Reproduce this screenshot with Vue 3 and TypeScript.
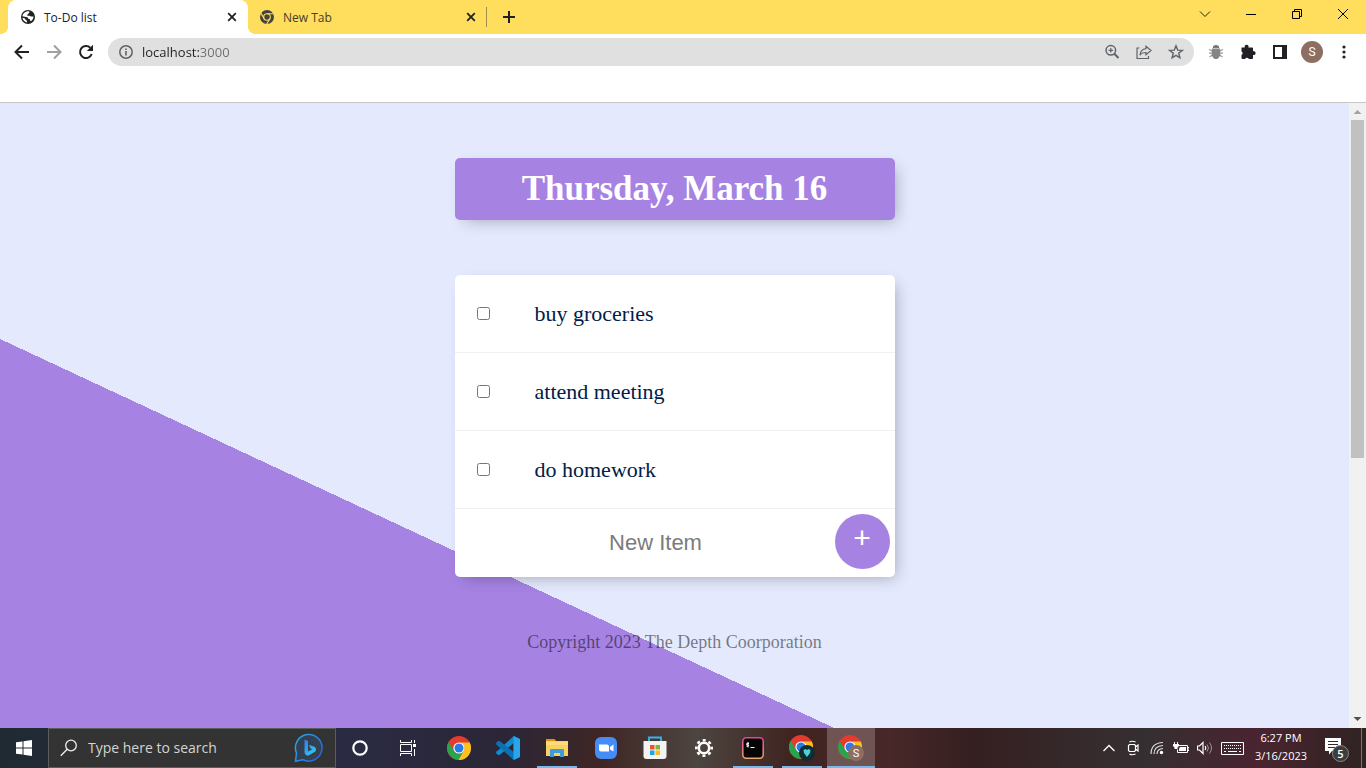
<script setup lang="ts">
import { ref } from 'vue'

interface Todo { id: string; text: string; done: boolean }

const title = 'Thursday, March 16'
const address = ref('localhost:3000')
const search = ref('')
const newItem = ref('')
const todos = ref<Todo[]>([
  { id: 'todo-1', text: 'buy groceries', done: false },
  { id: 'todo-2', text: 'attend meeting', done: false },
  { id: 'todo-3', text: 'do homework', done: false },
])

function addItem() {
  const text = newItem.value.trim()
  if (!text) return
  todos.value.push({ id: `todo-${todos.value.length + 1}`, text, done: false })
  newItem.value = ''
}
</script>

<template>
  <div class="screen">
    <svg class="defs" aria-hidden="true">
      <symbol id="chrome" viewBox="0 0 24 24">
        <circle cx="12" cy="12" r="12" fill="#e33b2e" />
        <path d="M1.6 6 7.2 14.8A5.5 5.5 0 0 0 16.8 14.8L11.5 24A12 12 0 0 1 1.6 6z" fill="#2ba24c" />
        <path d="M12 6.5H22.7A12 12 0 0 1 11.5 24L16.8 14.8A5.5 5.5 0 0 0 12 6.5z" fill="#fcc31e" />
        <circle cx="12" cy="12" r="5.6" fill="#fff" />
        <circle cx="12" cy="12" r="4.5" fill="#2a7bea" />
      </symbol>
      <symbol id="cross" viewBox="0 0 10 10">
        <path d="M1.2 1.2 8.8 8.8M8.8 1.2 1.2 8.8" fill="none" stroke="currentColor" stroke-width="1.8" />
      </symbol>
    </svg>

    <header class="tabstrip">
      <div class="tab active">
        <svg width="14" height="14" viewBox="0 0 14 14"><circle cx="7" cy="7" r="7" fill="#202124" /><path d="M7.6 1.3c1.2.3 1.1 1.3.3 1.8-.7.5-.6 1.1-1.3 1.4-.5.2-.4 1-.1 1.3.9.2 1.9-.5 2.6.1.8.7 2 .6 3.4.6-.1 2-1 3.7-2.6 4.8-.6-.1-.9-.4-.8-1.2 0-.8-.6-.8-1.4-1-.7-.4-.6-1.5-1.4-1.9C4.7 6.8 2.7 6.6 1.4 6.3 1.7 3.6 4.3 1.2 7.6 1.3z" fill="#fff" /><path d="M1.5 7.8c1.6.2 2.7.7 3 1.6.2.9 1.5.8 1.5 1.7v1.3C3.6 12 1.7 10.2 1.5 7.8z" fill="#fff" /></svg>
        <span class="tab-title">To-Do list</span>
        <button class="close" aria-label="Close To-Do list"><svg width="10" height="10"><use href="#cross" /></svg></button>
      </div>
      <div class="tab">
        <svg width="14" height="14" viewBox="0 0 14 14"><circle cx="7" cy="7" r="7" fill="#44433f" /><g fill="none" stroke="#ffdd5d" stroke-width="1.1"><circle cx="7" cy="7" r="3.3" /><path d="M7 3.7h6.5M4.1 8.6.9 3.1M9.9 8.6 6.7 14.1" /></g></svg>
        <span class="tab-title">New Tab</span>
        <button class="close" aria-label="Close New Tab"><svg width="10" height="10"><use href="#cross" /></svg></button>
      </div>
      <span class="tab-divider"></span>
      <button class="new-tab" aria-label="New tab"><svg width="12" height="12"><path d="M6 0v12M0 6h12" stroke="#202124" stroke-width="2" /></svg></button>
      <div class="window-controls">
        <button aria-label="Search tabs"><svg width="12" height="12" viewBox="0 0 12 12"><path d="M1 3.5 6 8.5 11 3.5" fill="none" stroke="#222" /></svg></button>
        <button aria-label="Minimize"><svg width="10" height="10"><path d="M0 5.500h10" stroke="#000" /></svg></button>
        <button aria-label="Restore"><svg width="10" height="10"><path d="M.5 2.500h7v7h-7zM2.500 2.500v-2h7v7h-2" fill="none" stroke="#000" /></svg></button>
        <button aria-label="Close window"><svg width="10" height="10"><path d="M0 0 10 10M10 0 0 10" stroke="#000" /></svg></button>
      </div>
    </header>

    <nav class="toolbar">
      <button class="nav-button" aria-label="Back"><svg width="16" height="16" viewBox="0 0 16 16"><path d="M15 8H2M8 1.500 1.500 8 8 14.500" fill="none" stroke="#202124" stroke-width="2" /></svg></button>
      <button class="nav-button" aria-label="Forward"><svg width="16" height="16" viewBox="0 0 16 16"><path d="M1 8H14M8 1.500 14.500 8 8 14.500" fill="none" stroke="#a0a0a2" stroke-width="2" /></svg></button>
      <button class="nav-button" aria-label="Reload"><svg width="16" height="16" viewBox="0 0 16 16"><path d="M13.700 10A6 6 0 1 1 12.300 3.800" fill="none" stroke="#202124" stroke-width="2" /><path d="M15 .8V7H8.800z" fill="#202124" /></svg></button>
      <div class="omnibox">
        <svg width="14" height="14" viewBox="0 0 14 14"><circle cx="7" cy="7" r="6.200" fill="none" stroke="#5f6368" stroke-width="1.500" /><path d="M7 6v4.500M7 3.500V5" stroke="#5f6368" stroke-width="1.600" /></svg>
        <input v-model="address" class="address" type="text" aria-label="Address" />
        <button aria-label="Zoom"><svg width="16" height="16" viewBox="0 0 16 16"><g fill="none" stroke="#5f6368" stroke-width="1.500"><circle cx="6.800" cy="6.300" r="4.800" /><path d="m10.300 9.800 4.200 4.200" stroke-width="2" /><path d="M6.800 4v4.600M4.500 6.300h4.600" stroke-width="1.200" /></g></svg></button>
        <button aria-label="Share"><svg width="16" height="16" viewBox="0 0 16 16"><path d="M3.500 4H1v10.500h11.500V12M10 2.200l5 4.300-5 4.300V8.500C7 8.500 5 9.500 4 11.200 4.300 7.500 6.500 5 10 4.600z" fill="none" stroke="#5f6368" stroke-width="1.200" /></svg></button>
        <button aria-label="Bookmark"><svg width="16" height="16" viewBox="0 0 16 16"><path d="m8 1.800 1.700 4.300 4.600.3-3.600 2.900 1.200 4.500L8 11.300l-3.900 2.500 1.200-4.500L1.700 6.400l4.600-.3z" fill="none" stroke="#5f6368" stroke-width="1.400" /></svg></button>
      </div>
      <div class="extensions">
        <button aria-label="Debugger extension"><svg width="16" height="16" viewBox="0 0 16 16"><path d="M1 5.500 4 7M15 5.500 12 7M1 9.200h3M15 9.200h-3M1.500 13 5 10.500M14.500 13 11 10.500" stroke="#999" stroke-width="1.200" /><path d="M4.800 4C4.800 1.700 6 1 8 1s3.200.7 3.200 3z" fill="#777" /><path d="M3.800 5h8.400v5.200c0 2.500-2 4.800-4.200 4.800s-4.200-2.300-4.200-4.800z" fill="#858585" /><path d="M4 4.600h8" stroke="#bbb" /></svg></button>
        <button aria-label="Extensions"><svg width="16" height="16" viewBox="0 0 16 16"><path d="M1.500 3.500h3.300a2 2 0 1 1 3.600 0h3.900q.7 0 .7.700v3a2 2 0 1 1 0 3.800v3q0 .9-.9.900H8.800a2 2 0 0 0-3.700 0H2.300q-.8 0-.8-.8v-3a2 2 0 0 0 0-3.600z" fill="#202124" /></svg></button>
        <button aria-label="Side panel"><svg width="14" height="14"><path d="M0 0h14v14H0zM2 2v10h7V2z" fill="#202124" fill-rule="evenodd" /></svg></button>
        <button class="avatar" aria-label="Profile">S</button>
        <button aria-label="Menu"><svg width="4" height="14" viewBox="0 0 4 14"><g fill="#202124"><circle cx="2" cy="2" r="1.600" /><circle cx="2" cy="7" r="1.600" /><circle cx="2" cy="12" r="1.600" /></g></svg></button>
      </div>
    </nav>
    <div class="bookmarks"></div>

    <div class="viewport">
      <main class="page">
        <h1 class="heading">{{ title }}</h1>
        <form class="list" @submit.prevent="addItem">
          <div v-for="todo in todos" :key="todo.id" class="item">
            <input :id="todo.id" v-model="todo.done" type="checkbox" />
            <label :for="todo.id">{{ todo.text }}</label>
          </div>
          <div class="entry">
            <input v-model="newItem" type="text" placeholder="New Item" aria-label="New Item" />
            <button type="submit" class="add">+</button>
          </div>
        </form>
        <footer>Copyright 2023 The Depth Coorporation</footer>
      </main>
      <div class="scrollbar">
        <svg width="17" height="17"><path d="M4.500 11 8.500 7l4 4z" fill="#a3a3a3" /></svg>
        <div class="thumb"></div>
        <svg width="17" height="17"><path d="M4.500 6h8l-4 4z" fill="#505050" /></svg>
      </div>
    </div>

    <div class="taskbar">
      <button class="start" aria-label="Start"><svg width="16" height="16" viewBox="0 0 16 16"><path d="M0 2.300 6.500 1.400V7.500H0zM7.500 1.200 16 0V7.500H7.500zM0 8.500H6.500V14.600L0 13.700zM7.500 8.500H16V16L7.500 14.800z" fill="#fff" /></svg></button>
      <div class="search">
        <svg width="18" height="18" viewBox="0 0 18 18"><circle cx="11" cy="6.500" r="5.300" fill="none" stroke="#eee" stroke-width="1.300" /><path d="M7.200 10.300.8 16.800" stroke="#eee" stroke-width="1.400" /></svg>
        <input v-model="search" type="text" placeholder="Type here to search" aria-label="Type here to search" />
        <svg width="30" height="30" viewBox="0 0 30 30">
          <defs>
            <linearGradient id="bing-edge" x2="1" y2=".6"><stop stop-color="#28aee0" /><stop offset="1" stop-color="#2869dc" /></linearGradient>
            <linearGradient id="bing-mark" x2=".7" y2="1"><stop stop-color="#3478e8" /><stop offset="1" stop-color="#35c7ee" /></linearGradient>
          </defs>
          <path d="M1.500 28.200 2.500 20A13.300 13.300 0 1 1 9 26.800z" fill="#33404f" stroke="url(#bing-edge)" stroke-width="1.500" />
          <path d="m10.500 6.500 3.500 1.600v10.400l4.200-2.300-1.900-1-1.400-3.500 5.500 2.100q2 1 1.600 3.100-.2 1.300-1.500 2.200L14 22.800q-3.500-.5-3.500-4z" fill="url(#bing-mark)" />
        </svg>
      </div>
      <button class="task" aria-label="Cortana"><svg width="16" height="16"><circle cx="8" cy="8" r="6.700" fill="none" stroke="#fff" stroke-width="2.200" /></svg></button>
      <button class="task" aria-label="Task view"><svg width="17" height="16" viewBox="0 0 17 16"><path d="M.5 0v2.500h11V0M.5 16v-2.500h11V16M.5 4.500h11v7H.5zM14.500 0v3M14.500 9v7" fill="none" stroke="#fff" /><path d="M13 4h3v3h-3z" fill="#fff" /></svg></button>
      <div class="apps">
        <button class="task" aria-label="Google Chrome"><svg width="24" height="24"><use href="#chrome" /></svg></button>
        <button class="task" aria-label="Visual Studio Code"><svg width="24" height="24" viewBox="0 0 24 24"><path d="M17.800 0 24 3v18l-6.200 3-15-14.700 1.700-1.500L17.500 18z" fill="#1479bd" /><path d="M17.800 0 2 14.600.3 15.400 0 17l2 2 2-.3L17.800 7z" fill="#118bd1" /><path d="m0 7 2-2 2 .2 14 11V24L.4 8.700z" fill="#0b70b4" /><path d="M17.500 0 24 3v18l-6.500 3z" fill="#28a5ec" /></svg></button>
        <button class="task open" aria-label="File Explorer"><svg width="22" height="20" viewBox="0 0 22 20"><path d="M0 1h8l2 2h12v15H0z" fill="#f8d163" /><path d="M0 1h8l1.500 2H0z" fill="#dc9410" /><path d="M0 4h22v3H0z" fill="#ffdc78" /><path d="M4 19v-7q0-1 1-1h12q1 0 1 1v7h-4v-4H8v4z" fill="#409cd4" /></svg></button>
        <button class="task" aria-label="Zoom"><svg width="22" height="22" viewBox="0 0 22 22"><rect width="22" height="22" rx="6" fill="#458cf6" /><path d="M4 7.500h8q2 0 2 2v5H6q-2 0-2-2zM15 10l3.500-2.500v7L15 12.500z" fill="#fff" /></svg></button>
        <button class="task" aria-label="Microsoft Store"><svg width="24" height="24" viewBox="0 0 24 24"><path d="M6 6V1.500h12V6" fill="none" stroke="#35b5e9" stroke-width="1.800" /><path d="M.5 5h23v15q0 3-3 3h-17q-3 0-3-3z" fill="#f3f3f4" /><path d="M7 9h4.500v4.500H7z" fill="#ef5325" /><path d="M12.500 9H17v4.500h-4.500z" fill="#7db82f" /><path d="M7 14.500h4.500V19H7z" fill="#21a2e8" /><path d="M12.500 14.500H17V19h-4.500z" fill="#fbb91c" /></svg></button>
        <button class="task" aria-label="Settings"><svg width="18" height="18" viewBox="0 0 18 18"><circle cx="9" cy="9" r="5.200" fill="none" stroke="#fff" stroke-width="2.600" /><circle cx="9" cy="9" r="7.700" fill="none" stroke="#fff" stroke-width="2.500" stroke-dasharray="3.020 3.020" stroke-dashoffset="1.500" /></svg></button>
        <button class="task open" aria-label="Terminal"><svg width="22" height="22" viewBox="0 0 22 22"><defs><linearGradient id="terminal-edge" x2="0" y2="1"><stop stop-color="#e5459e" /><stop offset="1" stop-color="#efa468" /></linearGradient></defs><rect x=".8" y=".8" width="20.400" height="20.400" rx="3.500" fill="#050505" stroke="url(#terminal-edge)" stroke-width="1.500" /><path d="M7 6.500 5 6.200 4.500 7.500 6.500 8 6 9.300 4.300 9M6 5v5.500M8.500 10.500h4" fill="none" stroke="#fff" /></svg></button>
        <button class="task open" aria-label="Chrome, profile one"><svg width="26" height="26" viewBox="0 0 26 26"><use href="#chrome" width="24" height="24" /><circle cx="18" cy="18" r="8" fill="#132b32" /><path d="m14.500 15 2-1 1.500 1 1.500-1 2 1-.5 3-3 4-3-4z" fill="#48d4d4" /></svg></button>
        <button class="task open current" aria-label="Chrome, profile S"><svg width="26" height="26" viewBox="0 0 26 26"><use href="#chrome" width="24" height="24" /><circle cx="18" cy="18" r="8" fill="#8d6e63" /><text x="18" y="22" text-anchor="middle" font-size="11" font-family="Roboto, sans-serif" fill="#fff">S</text></svg></button>
      </div>
      <div class="tray">
        <button aria-label="Show hidden icons"><svg width="12" height="8"><path d="M.5 7 6 1.500 11.500 7" fill="none" stroke="#fff" stroke-width="1.300" /></svg></button>
        <button aria-label="Meet Now"><svg width="12" height="16" viewBox="0 0 12 16"><path d="M2.500 4.500h5l1 1v5l-1 1h-5l-1-1v-5zM8.500 7l2.500-2v6L8.500 9M2.500 2q2.500-1.500 6 0M2.500 14q2.500 1.500 6 0" fill="none" stroke="#fff" stroke-width="1.200" /></svg></button>
        <button aria-label="Network"><svg width="14" height="14" viewBox="0 0 14 14"><g fill="none" stroke="#ddd" stroke-width="1.200"><path d="M1 13Q1 2 13 1.500M4 13Q4 5 13 4.500M7 13Q7 8 13 7.500" /></g><circle cx="11.500" cy="11.500" r="1.700" fill="#fff" /></svg></button>
        <button aria-label="Battery"><svg width="16" height="14" viewBox="0 0 16 14"><path d="M6 4.500h8.500v7H4.500V8.500M14.500 6.500H16v3h-1.500M1.500 1v2M4.500 1v2" fill="none" stroke="#fff" /><path d="M0 3h6v2L4.500 6.500V8h-3V6.500L0 5zM7 6h6v4H6V8z" fill="#fff" /></svg></button>
        <button aria-label="Volume"><svg width="16" height="14" viewBox="0 0 16 14"><path d="M.5 5h2L6 1.500v11L2.500 9h-2zM8 5q1.500 2 0 4" fill="none" stroke="#fff" stroke-width="1.200" /><path d="M10 3.500q3 3.500 0 7M12.500 1.500q4 5.500 0 11" fill="none" stroke="#999" /></svg></button>
        <button class="keyboard" aria-label="Touch keyboard"><svg width="23" height="13" viewBox="0 0 23 13"><path d="M.5.5h22v12H.5z" fill="none" stroke="#fff" /><path d="M3 3.500h17M3 6.500h17" stroke="#fff" stroke-dasharray="1 1" /><path d="M3 9.500h2M7 9.500h9M18 9.500h2" stroke="#fff" /></svg></button>
        <button class="clock"><span>6:27 PM</span><span>3/16/2023</span></button>
        <button class="notices" aria-label="5 notifications"><svg width="26" height="26" viewBox="0 0 26 26"><path d="M1 1h16v13H8l-3 3.500V14H1z" fill="#fff" /><path d="M4 4.500h10M4 7.500h10M4 10.500h7" stroke="#352b2d" /><circle cx="16.500" cy="16.500" r="8" fill="#3b3d3f" stroke="#85878a" /><text x="16.500" y="20.500" text-anchor="middle" font-family="Open Sans, sans-serif" font-size="11" font-weight="600" fill="#fff">5</text></svg></button>
        <span class="show-desktop"></span>
      </div>
    </div>
  </div>
</template>

<style>
body { margin: 0; }
</style>

<style scoped>
.screen { height: 100vh; display: flex; flex-direction: column; overflow: hidden; background: #fff; font-family: "Open Sans", "Noto Sans", sans-serif; }
.screen *, .screen *::before, .screen *::after { box-sizing: border-box; }
.defs { display: none; }
button { border: 0; padding: 0; margin: 0; background: none; color: inherit; font: inherit; display: flex; align-items: center; justify-content: center; }
svg { display: block; flex: none; }

.tabstrip { height: 34px; flex: none; display: flex; align-items: center; padding-left: 8px; background: #ffdd5d; color: #202124; }
.tab { position: relative; width: 240px; height: 34px; display: flex; align-items: center; gap: 9px; padding: 0 11px 0 13px; font-size: 12px; }
.tab:not(.active) { padding-left: 12px; width: 238px; padding-right: 10px; color: #45402c; }
.tab.active { background: #fff; border-radius: 8px 8px 0 0; }
.tab.active::before, .tab.active::after { content: ""; position: absolute; bottom: 0; width: 8px; height: 8px; }
.tab.active::before { right: 100%; background: radial-gradient(circle at 0 0, transparent 8px, #fff 8px); }
.tab.active::after { left: 100%; background: radial-gradient(circle at 100% 0, transparent 8px, #fff 8px); }
.tab-title { flex: 1; }
.close { color: #202124; }
.tab-divider { width: 1px; height: 20px; background: #a18d45; }
.new-tab { width: 44px; height: 34px; }
.window-controls { margin-left: auto; align-self: flex-start; display: flex; }
.window-controls button { width: 46px; height: 28px; }

.toolbar { height: 36px; flex: none; display: flex; align-items: center; padding: 0 6px; }
.nav-button { width: 32px; height: 28px; }
.omnibox { flex: 1; min-width: 0; height: 28px; display: flex; align-items: center; margin-left: 6px; padding: 0 10px 0 11px; gap: 16px; border-radius: 14px; background: #e0e0e0; }
.address { flex: 1; min-width: 0; margin-left: -7px; border: 0; padding: 0; outline: 0; background: linear-gradient(90deg, #202124 57px, #6b6e72 57px); background-clip: text; color: transparent; caret-color: #202124; font: 13px/20px "Open Sans", sans-serif; }
.extensions { display: flex; margin-left: 6px; }
.extensions button { width: 32px; height: 28px; }
.extensions .avatar { width: 22px; height: 22px; margin: 3px 5px; border-radius: 50%; background: #8d6e63; color: #fff; font: 12px Roboto, sans-serif; }
.bookmarks { height: 33px; flex: none; border-bottom: 1px solid #c8c8c8; }

.viewport { flex: 1; min-height: 0; display: flex; }
.page { flex: 1; min-width: 0; padding: 55px 20px 0; overflow: hidden; background: #e4e9fd linear-gradient(25deg, #a683e3 50%, #e4e9fd 50%) top / 100% 1101px no-repeat; font-family: "Liberation Serif", serif; }
.heading { max-width: 440px; margin: 0 auto 55px; padding: 11px; border-radius: 5px; background: #a683e3; box-shadow: 5px 5px 15px -5px rgba(0, 0, 0, .3); color: #fff; font-size: 35px; line-height: 40px; text-align: center; }
.list { max-width: 440px; margin: 0 auto; border-radius: 5px; background: #fff; box-shadow: 5px 5px 15px -5px rgba(0, 0, 0, .3); }
.item { height: 78px; display: flex; align-items: center; border-bottom: 1px solid #f1f1f1; }
.item input { width: 13px; height: 13px; margin: 0 45px 0 22px; }
.item label { color: #00204a; font-size: 22px; line-height: 26px; }
.entry { display: flex; align-items: center; height: 68px; padding: 0 5px 4px 22px; }
.entry input { flex: 1; min-width: 0; height: 60px; border: 0; padding: 4px 0 0; outline: 0; background: none; text-align: center; font: 22px "Liberation Sans", sans-serif; }
.entry input::placeholder { color: #7b7b7b; }
.add { width: 55px; height: 55px; padding-bottom: 6px; border-radius: 50%; background: #a683e3; color: #fff; font: 30px/30px "Liberation Sans", sans-serif; }
footer { margin-top: 55px; color: rgba(0, 0, 0, .5); font-size: 18px; line-height: 20px; text-align: center; }
.scrollbar { width: 17px; flex: none; display: flex; flex-direction: column; background: #f1f1f1; }
.thumb { height: 54%; margin: 0 2px auto; background: #c1c1c1; }

.taskbar { height: 40px; flex: none; display: flex; background: linear-gradient(90deg, #202a33 0, #2a2b43 25%, #2b2637 37%, #3f2624 44%, #4d4540 51%, #3f2420 58%, #482829 65%, #351f20 71%, #352b2d 80%, #352f31 84%, #4a2430 92%, #2f2322 100%); color: #fff; }
.start { width: 48px; }
.search { width: 288px; display: flex; align-items: center; padding: 0 11px; gap: 10px; border: 1px solid #5c5c5c; background: #333; }
.search input { flex: 1; min-width: 0; border: 0; padding: 0; outline: 0; background: none; color: #ddd; font: 14px/20px "Open Sans", sans-serif; }
.search input::placeholder { color: #d4d4d4; }
.task { width: 48px; height: 40px; }
.apps { display: flex; gap: 1px; margin-left: 3px; }
.open { background: linear-gradient(#76b9ed, #76b9ed) bottom / 40px 2px no-repeat; }
.current { background: linear-gradient(#76b9ed, #76b9ed) bottom / 100% 2px no-repeat, #6f5454; }
.tray { margin-left: auto; display: flex; align-items: center; }
.tray button { width: 24px; height: 40px; }
.tray .keyboard { width: 31px; }
.tray .clock { width: 66px; flex-direction: column; font-size: 11px; line-height: 18px; padding-bottom: 2px; }
.tray .notices { width: 46px; padding-top: 4px; }
.show-desktop { width: 5px; height: 40px; margin-left: 1px; border-left: 1px solid #777; }
</style>
